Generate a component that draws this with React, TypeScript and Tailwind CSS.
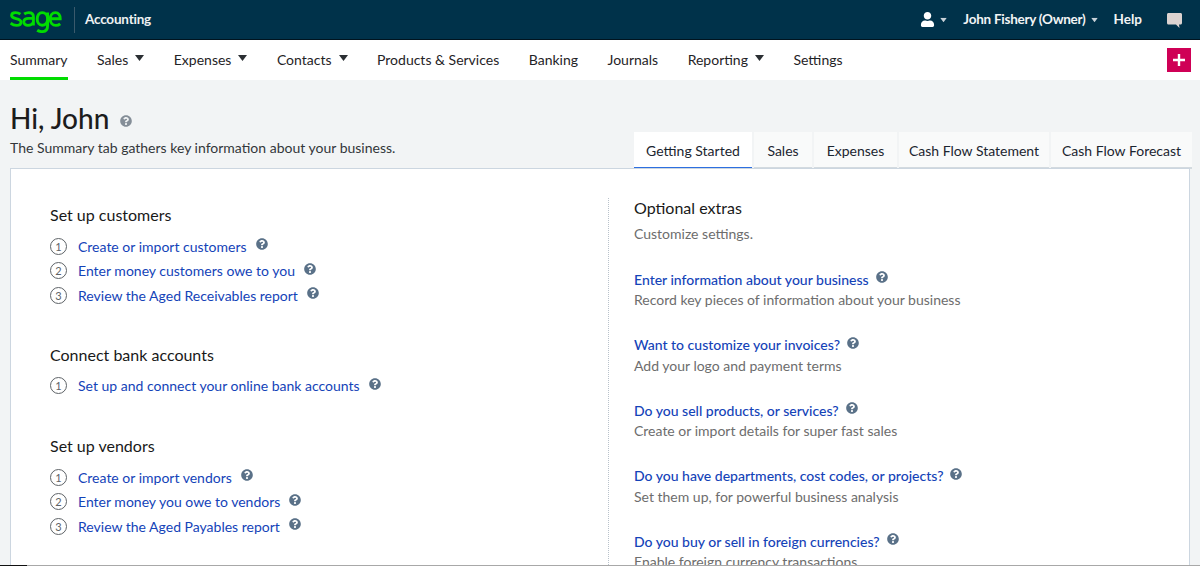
import { FaQuestionCircle, FaUser } from "react-icons/fa";

const Caret = ({ cls = "" }: { cls?: string }) => (
  <svg width="9" height="6" viewBox="0 0 9 6" className={cls}>
    <path d="M0 0h9L4.5 6z" fill="currentColor" />
  </svg>
);

const SageLogo = () => (
  <svg width="52" height="23" viewBox="0 0 52 23" className="block" fill="none" stroke="#00dc00" strokeWidth="2.9">
    <path d="M10.4 4.2C8.8 3 7 2.6 5.4 2.6 3 2.6 1.6 3.8 1.6 5.6c0 4 9.4 2 9.4 6.6 0 2-1.8 3.2-4.6 3.2-2.2 0-4.2-.8-5.8-2.2" />
    <path d="M14.2 4C15.6 3 17.2 2.6 18.8 2.6c3 0 4.6 1.6 4.6 4.2V15.6M23.4 8.4h-4.8c-3 0-4.8 1.2-4.8 3.4 0 2.2 1.8 3.6 4.2 3.6 2.4 0 4.4-1.2 5.4-3" />
    <path d="M37.6 2.4V15.4c0 4-2 6.2-5.8 6.2-1.8 0-3.2-.4-4.6-1.4M37.6 9c0 3.6-2.4 6.2-5.4 6.2s-5-2.6-5-6.2 2-6.4 5-6.4 5.4 2.6 5.4 6.4z" />
    <path d="M40.6 8.8h9.6c.2-3.8-1.8-6.2-4.8-6.2-3 0-5.2 2.6-5.2 6.4 0 3.800 2.400 6.400 5.600 6.400 1.800 0 3.200-.6 4.400-1.600" />
  </svg>
);

const Help = ({ cls = "ml-[9px]" }: { cls?: string }) => (
  <FaQuestionCircle className={`${cls} relative -top-[2px] shrink-0 text-[12px] text-[#5a7188]`} />
);

const NavItem = ({ label, caret, active }: { label: string; caret?: boolean; active?: boolean }) => (
  <div className={`flex h-full items-center pt-px ${active ? "border-b-[3px] border-[#00dc00]" : "border-b-[3px] border-transparent"}`}>
    <span>{label}</span>
    {caret && <Caret cls="ml-[7px] -mt-[3px] text-[#2b2f33]" />}
  </div>
);

const Step = ({ n, label }: { n: number; label: string }) => (
  <div className="flex h-[24.5px] items-center">
    <span className="flex h-[17px] w-[17px] shrink-0 items-center justify-center rounded-full border border-[#5e6367] text-[11px] leading-none text-[#5e6367]">
      {n}
    </span>
    <a className="ml-[11px] text-[#1443b8]">{label}</a>
    <Help />
  </div>
);

const Group = ({ title, steps, cls }: { title: string; steps: string[]; cls: string }) => (
  <section className={cls}>
    <h2 className="text-[16px] leading-[20px] text-[#191919]">{title}</h2>
    <div className="mt-[9px]">
      {steps.map((s, i) => (
        <Step key={s} n={i + 1} label={s} />
      ))}
    </div>
  </section>
);

const Extra = ({ title, desc }: { title: string; desc: string }) => (
  <div className="h-[65.6px]">
    <div className="flex h-[20px] items-center">
      <a className="font-medium text-[#1443b8]">{title}</a>
      <Help cls="ml-[7px]" />
    </div>
    <p className="mt-px leading-[20px] text-[#6d6d6d]">{desc}</p>
  </div>
);

const tabs = [
  { t: "Getting Started", w: "w-[118px]" },
  { t: "Sales", w: "w-[58px]" },
  { t: "Expenses", w: "w-[83px]" },
  { t: "Cash Flow Statement", w: "w-[150px]" },
  { t: "Cash Flow Forecast", w: "w-[141px]" },
];

export default function App() {
  return (
    <div className="flex h-screen flex-col overflow-hidden bg-[#f2f4f5] font-['Lato','Noto_Sans',sans-serif] text-[14px] text-[#1f2326]">
      <header className="flex h-[40px] shrink-0 items-center border-b border-[#00141f] bg-[#00324a] text-white">
        <div className="ml-[10px] mt-[3px]">
          <SageLogo />
        </div>
        <div className="ml-[12px] h-[26px] w-px bg-[#3a5a6c]" />
        <span className="ml-[10px] font-bold text-[#eef1f2] text-[13.5px] tracking-[-0.2px]">Accounting</span>
        <div className="ml-auto flex items-center">
          <FaUser className="text-[15px] text-white" />
          <Caret cls="ml-[4px] scale-75 text-[#c8d2d8]" />
          <span className="ml-[15px] font-bold text-[13.5px] tracking-[-0.25px] text-[#f2f4f5]">John Fishery (Owner)</span>
          <Caret cls="ml-[4px] scale-75 text-[#c8d2d8]" />
          <span className="ml-[15px] font-bold text-[13.5px] text-[#f2f4f5]">Help</span>
          <svg width="17" height="17" viewBox="0 0 17 17" className="ml-[24px] mr-[17px] mt-[1px]">
            <path d="M2.500 1h12c.9 0 1.500.6 1.500 1.500v8.500c0 .9-.6 1.500-1.500 1.500h-1.500l.5 3.500-3.500-3.500H2.500c-.9 0-1.500-.6-1.500-1.500V2.500C1 1.600 1.600 1 2.500 1z" fill="#dcd3d0" />
          </svg>
        </div>
      </header>

      <nav className="flex h-[40px] shrink-0 items-center bg-white pl-[10px] pr-[9px]">
        <div className="flex h-full items-center gap-[29.5px]">
          <NavItem label="Summary" active />
          <NavItem label="Sales" caret />
          <NavItem label="Expenses" caret />
          <NavItem label="Contacts" caret />
          <NavItem label="Products & Services" />
          <NavItem label="Banking" />
          <NavItem label="Journals" />
          <NavItem label="Reporting" caret />
          <NavItem label="Settings" />
        </div>
        <button className="ml-auto flex h-[24px] w-[24px] items-center justify-center bg-[#cf0056]">
          <svg width="12" height="12" viewBox="0 0 12 12">
            <path d="M6 0v12M0 6h12" stroke="#fff" strokeWidth="2.400" />
          </svg>
        </button>
      </nav>

      <div className="flex h-[89px] shrink-0 items-end justify-between pl-[10px] pr-[8px]">
        <div className="mb-[11px]">
          <div className="flex items-center">
            <h1 className="text-[28px] font-medium leading-[34px] text-[#1c1c1c]">Hi, John</h1>
            <FaQuestionCircle className="ml-[11px] mt-[6px] text-[12px] text-[#858e98]" />
          </div>
          <p className="mt-[3px] leading-[20px] text-[#33373a]">The Summary tab gathers key information about your business.</p>
        </div>
        <div className="flex gap-[2px]">
          {tabs.map((t, i) => (
            <div
              key={t.t}
              className={`flex h-[37px] items-center justify-center border-b-2 pt-px ${t.w} ${i === 0 ? "border-[#2d6fe0] bg-white" : "border-[#d3dadf] bg-[#f9fafa]"} text-[#1b2530]`}
            >
              {t.t}
            </div>
          ))}
        </div>
      </div>

      <main className="mx-[10px] -mt-[1px] flex min-h-0 flex-1 overflow-hidden border-x border-t border-[#ccd6e0] bg-white">
        <div className="w-[597px] shrink-0 pl-[39px] pt-[36px]">
          <Group title="Set up customers" steps={["Create or import customers", "Enter money customers owe to you", "Review the Aged Receivables report"]} cls="" />
          <Group title="Connect bank accounts" steps={["Set up and connect your online bank accounts"]} cls="mt-[37px]" />
          <Group title="Set up vendors" steps={["Create or import vendors", "Enter money you owe to vendors", "Review the Aged Payables report"]} cls="mt-[38px]" />
        </div>
        <div className="mt-[29px] border-l border-dotted border-[#b9c2cb] pl-[25px] pt-0">
          <h2 className="text-[16px] leading-[20px] text-[#191919]">Optional extras</h2>
          <p className="mb-[25px] mt-[6px] leading-[20px] text-[#6d6d6d]">Customize settings.</p>
          <Extra title="Enter information about your business" desc="Record key pieces of information about your business" />
          <Extra title="Want to customize your invoices?" desc="Add your logo and payment terms" />
          <Extra title="Do you sell products, or services?" desc="Create or import details for super fast sales" />
          <Extra title="Do you have departments, cost codes, or projects?" desc="Set them up, for powerful business analysis" />
          <Extra title="Do you buy or sell in foreign currencies?" desc="Enable foreign currency transactions" />
        </div>
      </main>
      <div className="flex h-px shrink-0 bg-[#a8a8a8]">
        <div className="w-[27px] bg-[#111]" />
      </div>
    </div>
  );
}
